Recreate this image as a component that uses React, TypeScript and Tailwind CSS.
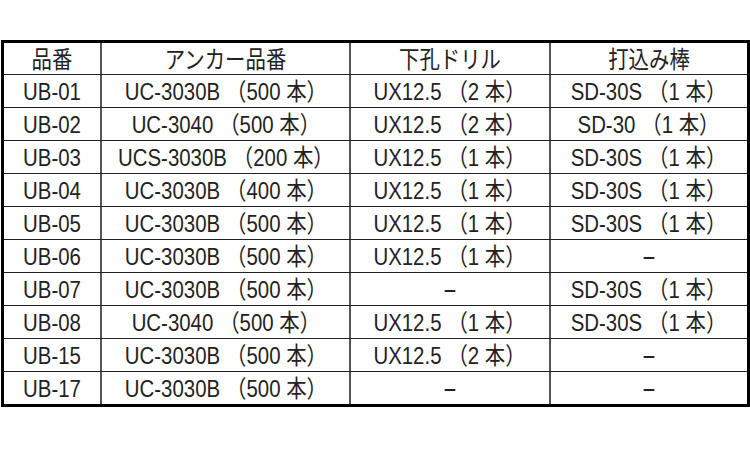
import React from "react";

const rows = [
  ["UB-01", "UC-3030B（500 本）", "UX12.5（2 本）", "SD-30S（1 本）"],
  ["UB-02", "UC-3040（500 本）", "UX12.5（2 本）", "SD-30（1 本）"],
  ["UB-03", "UCS-3030B（200 本）", "UX12.5（1 本）", "SD-30S（1 本）"],
  ["UB-04", "UC-3030B（400 本）", "UX12.5（1 本）", "SD-30S（1 本）"],
  ["UB-05", "UC-3030B（500 本）", "UX12.5（1 本）", "SD-30S（1 本）"],
  ["UB-06", "UC-3030B（500 本）", "UX12.5（1 本）", "-"],
  ["UB-07", "UC-3030B（500 本）", "-", "SD-30S（1 本）"],
  ["UB-08", "UC-3040（500 本）", "UX12.5（1 本）", "SD-30S（1 本）"],
  ["UB-15", "UC-3030B（500 本）", "UX12.5（2 本）", "-"],
  ["UB-17", "UC-3030B（500 本）", "-", "-"],
];

const header = ["品番", "アンカー品番", "下孔ドリル", "打込み棒"];

function Cell({ text, className }: { text: string; className: string }) {
  const parts = text.split("（");
  return (
    <div className={`flex items-center justify-center ${className}`}>
      {text === "-" ? (
        <span className="inline-block scale-x-[1.8]">-</span>
      ) : (
        <span className="inline-block whitespace-nowrap scale-x-[0.85] translate-y-[1px]">
          {parts[0]}
          {parts.length > 1 && <span className="ml-[7px]">（{parts[1]}</span>}
        </span>
      )}
    </div>
  );
}

function Row({ cells, first }: { cells: string[]; first?: boolean }) {
  return (
    <div className={`flex ${first ? "h-[31px]" : "h-[33px] border-t border-[#222]"}`}>
      <Cell text={cells[0]} className="w-[96px]" />
      <Cell text={cells[1]} className="w-[249px] border-l-2 border-[#555]" />
      <Cell text={cells[2]} className="w-[200px] border-l-2 border-[#555]" />
      <Cell text={cells[3]} className="flex-1 border-l-2 border-[#555]" />
    </div>
  );
}

export default function App() {
  return (
    <div className="w-[750px] h-[450px] bg-white pt-[40px] pl-[1px]">
      <div
        className="w-[749px] border-[3px] border-black text-[24px] text-[#222] leading-none"
        style={{ fontFamily: '"Liberation Sans", "Noto Sans CJK JP", sans-serif' }}
      >
        <Row cells={header} first />
        {rows.map((r, i) => (
          <Row key={i} cells={r} />
        ))}
      </div>
    </div>
  );
}
